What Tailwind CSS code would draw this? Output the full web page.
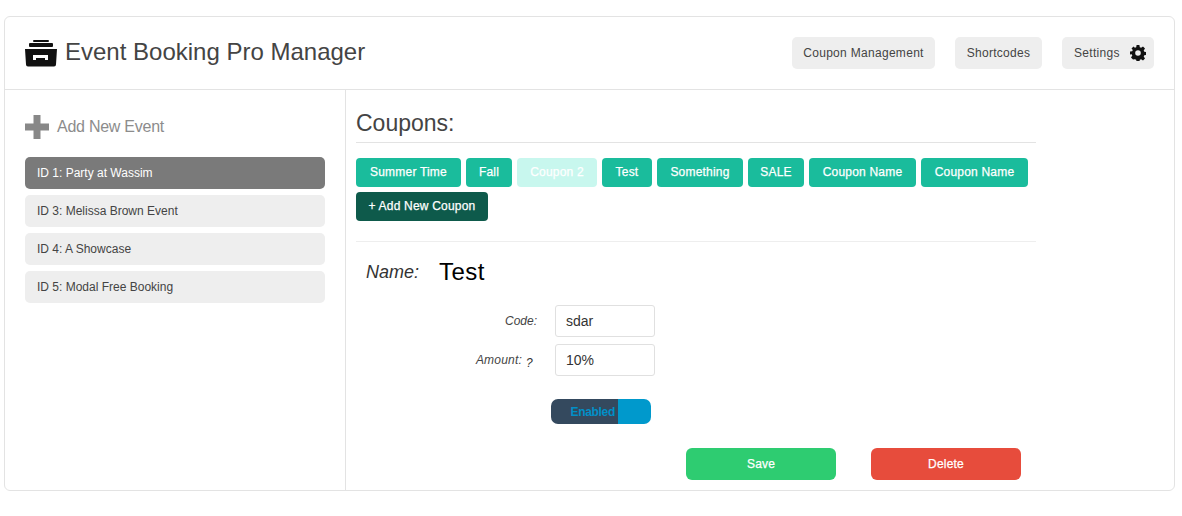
<!DOCTYPE html>
<html lang="en">
<head>
    <meta charset="UTF-8">
    <title>Event Booking Pro Manager</title>
    <script src="https://cdn.jsdelivr.net/npm/@tailwindcss/browser@4"></script>
</head>
<body class="bg-white font-['Liberation_Sans',Arial,sans-serif] text-[#333]">
    <div class="mt-[16px] ml-[4px] w-[1171px] h-[475px] border border-[#e3e3e3] rounded-[6px] flex flex-col overflow-hidden">
        <header class="h-[73px] shrink-0 border-b border-[#e3e3e3] flex items-center pl-[20px] pr-[20px]">
            <svg class="w-[32px] h-[27px] mr-[8px] mt-[1px]" viewBox="0 0 32 27" fill="#111">
                <rect x="8" y="0" width="16" height="2" rx="1"/>
                <rect x="4" y="3" width="24" height="4" rx="1"/>
                <path fill-rule="evenodd" d="M0 9h32l-1 15.500a2 2 0 0 1-2 2H3a2 2 0 0 1-2-2zM8 15v5h3v-2h9v2h3v-5z"/>
            </svg>
            <h1 class="text-[24px] text-[#444] -mt-[2px]">Event Booking Pro Manager</h1>
            <nav class="ml-auto flex gap-[20px] text-[12px] tracking-[0.3px] text-[#444]">
                <a class="h-[32px] w-[143px] rounded-[5px] bg-[#eee] flex items-center justify-center pb-[1px]">Coupon Management</a>
                <a class="h-[32px] w-[87px] rounded-[5px] bg-[#eee] flex items-center justify-center pb-[1px]">Shortcodes</a>
                <a class="h-[32px] w-[92px] rounded-[5px] bg-[#eee] flex items-center pl-[12px] pb-[1px]">Settings
                    <svg class="w-[16px] h-[16px] ml-[10px] mt-[1px]" viewBox="0 0 16 16" fill="#111">
                        <path fill-rule="evenodd" d="M6.600 0h2.800l.4 2.200 1.300.6L13 1.500l2 2-1.300 1.900.6 1.300 2.200.4v2.800l-2.200.4-.6 1.300 1.300 1.900-2 2-1.900-1.300-1.300.6-.4 2.200H6.600l-.4-2.200-1.300-.6L3 14.500l-2-2 1.300-1.900-.6-1.300L0 9.400V6.600l2.200-.4.6-1.300L1.500 3.500l2-2 1.400 1.300 1.300-.6zM8 5.200a2.800 2.800 0 1 0 0 5.600 2.800 2.800 0 0 0 0-5.600z"/>
                    </svg>
                </a>
            </nav>
        </header>
        <div class="flex flex-1 min-h-0">
            <aside class="w-[341px] shrink-0 border-r border-[#e3e3e3] pl-[20px] pr-[20px] pt-[25px]">
                <div class="flex items-center h-[24px] text-[16px] tracking-[-0.25px] text-[#8c8c8c]">
                    <svg class="w-[24px] h-[24px] mr-[8px]" viewBox="0 0 24 24" fill="#888">
                        <path d="M8.500 0h7v8.500H24v7h-8.500V24h-7v-8.500H0v-7h8.500z"/>
                    </svg>
                    Add New Event
                </div>
                <ul class="mt-[18px] flex flex-col gap-[6px] text-[12px]">
                    <li class="h-[32px] rounded-[5px] bg-[#7a7a7a] text-white flex items-center px-[12px]">ID 1: Party at Wassim</li>
                    <li class="h-[32px] rounded-[5px] bg-[#eee] text-[#444] flex items-center px-[12px]">ID 3: Melissa Brown Event</li>
                    <li class="h-[32px] rounded-[5px] bg-[#eee] text-[#444] flex items-center px-[12px]">ID 4: A Showcase</li>
                    <li class="h-[32px] rounded-[5px] bg-[#eee] text-[#444] flex items-center px-[12px]">ID 5: Modal Free Booking</li>
                </ul>
            </aside>
            <main class="flex-1 pl-[10px] pt-[20px]">
                <div class="w-[680px]">
                    <h2 class="text-[23px] leading-[26px] h-[33px] border-b border-[#e3e3e3] text-[#444]">Coupons:</h2>
                    <div class="mt-[15px] flex flex-wrap gap-x-[5px] gap-y-[5px] text-[12px] tracking-[0.2px] [-webkit-text-stroke:0.25px_white] text-white">
                        <a class="h-[29px] w-[105px] pb-[2px] rounded-[4px] bg-[#1abc9c] flex items-center justify-center">Summer Time</a>
                        <a class="h-[29px] w-[46px] pb-[2px] rounded-[4px] bg-[#1abc9c] flex items-center justify-center">Fall</a>
                        <a class="h-[29px] w-[80px] pb-[2px] rounded-[4px] bg-[#c8f7ee] flex items-center justify-center">Coupon 2</a>
                        <a class="h-[29px] w-[50px] pb-[2px] rounded-[4px] bg-[#1abc9c] flex items-center justify-center">Test</a>
                        <a class="h-[29px] w-[86px] pb-[2px] rounded-[4px] bg-[#1abc9c] flex items-center justify-center">Something</a>
                        <a class="h-[29px] w-[56px] pb-[2px] rounded-[4px] bg-[#1abc9c] flex items-center justify-center">SALE</a>
                        <a class="h-[29px] w-[107px] pb-[2px] rounded-[4px] bg-[#1abc9c] flex items-center justify-center">Coupon Name</a>
                        <a class="h-[29px] w-[107px] pb-[2px] rounded-[4px] bg-[#1abc9c] flex items-center justify-center">Coupon Name</a>
                        <a class="h-[29px] w-[132px] pb-[2px] rounded-[4px] bg-[#0e5a4b] flex items-center justify-center">+ Add New Coupon</a>
                    </div>
                    <div class="mt-[20px] border-t border-[#eee]"></div>
                    <div class="flex items-center mt-[15px] pl-[10px] h-[30px]">
                        <span class="w-[73px] text-[18px] italic text-[#333]">Name:</span>
                        <span class="text-[24px] tracking-[0.5px] text-black">Test</span>
                    </div>
                    <div class="mt-[18px] flex flex-col gap-[7px]">
                        <div class="flex items-center">
                            <label class="w-[181px] text-right text-[12px] italic text-[#444]">Code:</label>
                            <input value="sdar" class="ml-[18px] w-[100px] h-[32px] border border-[#e0e0e0] rounded-[3px] px-[10px] text-[14px] text-[#333]">
                        </div>
                        <div class="flex items-center">
                            <label class="w-[181px] text-right text-[12px] italic text-[#444] pr-[15px] tracking-[0.2px]">Amount:</label>
                            <span class="-ml-[11px] mt-[5px] w-[11px] text-[12px] italic text-[#333]">?</span>
                            <input value="10%" class="ml-[18px] w-[100px] h-[32px] border border-[#e0e0e0] rounded-[3px] px-[10px] text-[14px] text-[#333]">
                        </div>
                    </div>
                    <div class="ml-[195px] mt-[23px] w-[100px] h-[25px] rounded-[7px] overflow-hidden flex text-[12px] font-bold tracking-[-0.3px] text-[#0090c8]">
                        <span class="w-[67px] bg-[#34495e] flex items-center justify-end pr-[3px]">Enabled</span>
                        <span class="flex-1 bg-[#0099cc]"></span>
                    </div>
                    <div class="ml-[330px] mt-[24px] flex gap-[35px] text-[12px] tracking-[0.2px] [-webkit-text-stroke:0.25px_white] text-white">
                        <button class="w-[150px] h-[32px] rounded-[6px] bg-[#2ecc71]">Save</button>
                        <button class="w-[150px] h-[32px] rounded-[6px] bg-[#e74c3c]">Delete</button>
                    </div>
                </div>
            </main>
        </div>
    </div>
</body>
</html>
